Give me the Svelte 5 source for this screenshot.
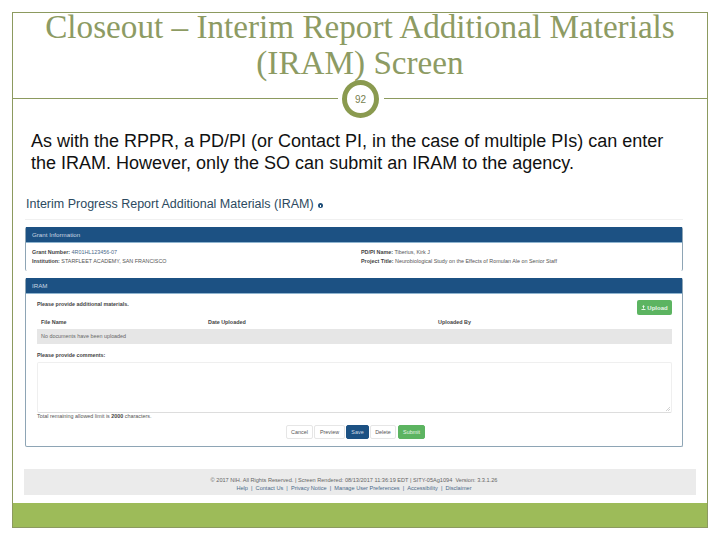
<script>
  const buttons = [
    { label: 'Cancel', kind: '' },
    { label: 'Preview', kind: 'preview' },
    { label: 'Save', kind: 'save' },
    { label: 'Delete', kind: 'delete' },
    { label: 'Submit', kind: 'submit' }
  ];
  const links = ['Help', 'Contact Us', 'Privacy Notice', 'Manage User Preferences', 'Accessibility', 'Disclaimer'];
</script>

<div class="slide">
  <header class="head">
    <h1>Closeout – Interim Report Additional Materials (IRAM) Screen</h1>
    <i class="gap"></i>
    <div class="num"><span>92</span></div>
  </header>

  <main class="body">
    <p class="lead">As with the RPPR, a PD/PI (or Contact PI, in the case of multiple PIs) can enter the IRAM. However, only the SO can submit an IRAM to the agency.</p>

    <div class="shot">
      <div class="shot-title">
        <h2>Interim Progress Report Additional Materials (IRAM)</h2>
        <svg class="help" viewBox="0 0 10 10" width="5" height="5"><circle cx="5" cy="5" r="5" fill="#1f4e79" /><rect x="4" y="4" width="2" height="4" fill="#fff" /></svg>
      </div>

      <section class="panel grant">
        <div class="panel-head">Grant Information</div>
        <div class="grant-body">
          <div>
            <div><b>Grant Number:</b> <span class="link">4R01HL123456-07</span></div>
            <div><b>Institution:</b> STARFLEET ACADEMY, SAN FRANCISCO</div>
          </div>
          <div>
            <div><b>PD/PI Name:</b> Tiberius, Kirk J</div>
            <div><b>Project Title:</b> Neurobiological Study on the Effects of Romulan Ale on Senior Staff</div>
          </div>
        </div>
      </section>

      <section class="panel iram">
        <div class="panel-head">IRAM</div>
        <div class="iram-body">
          <div class="provide">
            <b>Please provide additional materials.</b>
            <span class="upload">
              <svg viewBox="0 0 10 10" width="5" height="5"><path d="M5 0 8 3.500H6V7H4V3.500H2ZM1 8h8v2H1Z" fill="#e8f5e8" /></svg>
              Upload
            </span>
          </div>
          <div class="cols">
            <b>File Name</b>
            <b>Date Uploaded</b>
            <b>Uploaded By</b>
          </div>
          <div class="empty">No documents have been uploaded</div>
          <b class="label">Please provide comments:</b>
          <div class="box">
            <svg class="grip" viewBox="0 0 6 6" width="4" height="4"><path d="M0 6 6 0M3 6 6 3" stroke="#bbb" fill="none" /></svg>
          </div>
          <div class="limit">Total remaining allowed limit is <b>2000</b> characters.</div>
          <div class="actions">
            {#each buttons as btn}
              <span class="btn {btn.kind}">{btn.label}</span>
            {/each}
          </div>
        </div>
      </section>

      <footer class="foot">
        <div>© 2017 NIH. All Rights Reserved. | Screen Rendered: 08/13/2017 11:36:19 EDT | SITY-05Ag1094 &nbsp;Version: 3.3.1.26</div>
        <div class="foot-links">
          {#each links as link, i}
            <span>{link}</span>{#if i < links.length - 1}&nbsp; | &nbsp;{/if}
          {/each}
        </div>
      </footer>
    </div>
  </main>

  <div class="bar"></div>
</div>

<style>
  :global(body) {
    background: #fff;
  }

  .slide {
    box-sizing: border-box;
    width: 696px;
    height: 516px;
    margin: 12px 0 0 12px;
    border: 1px solid #8c9a5f;
    display: flex;
    flex-direction: column;
  }

  .head {
    position: relative;
    height: 85px;
    flex: none;
    border-bottom: 1px solid #8c9a5f;
    text-align: center;
  }

  h1 {
    margin: -4px auto 0;
    width: 680px;
    font: 400 33.200px/36px "Liberation Serif", serif;
    color: #8d9b63;
  }

  .gap {
    position: absolute;
    left: 325px;
    top: 83px;
    width: 46px;
    height: 4px;
    background: #fff;
  }

  .num {
    position: absolute;
    left: 329px;
    top: 67px;
    box-sizing: border-box;
    width: 37px;
    height: 38px;
    border: 5px solid #8a9a4f;
    border-radius: 50%;
    background: #fff;
    display: flex;
    align-items: center;
    justify-content: center;
  }

  .num span {
    font: 400 10px "Liberation Sans", sans-serif;
    color: #77804f;
  }

  .body {
    flex: 1;
    min-height: 0;
    padding: 31px 12px 0 18px;
    font-family: "Liberation Sans", sans-serif;
  }

  .lead {
    margin: 0;
    width: 640px;
    font-size: 18px;
    line-height: 22px;
    color: #111;
  }

  .shot {
    margin: 20px 10px 0 -6px;
    width: 658px;
    font-size: 5.400px;
    line-height: 8px;
    color: #555;
  }

  .shot-title {
    display: flex;
    align-items: center;
    gap: 4px;
    height: 20px;
    padding-bottom: 5px;
    padding-left: 1px;
    border-bottom: 1px solid #f0f0f0;
  }

  h2 {
    margin: 0;
    font-size: 12.500px;
    font-weight: 400;
    color: #2c4a60;
  }

  .help {
    margin-top: 2px;
  }

  .panel {
    box-sizing: border-box;
    border: 1px solid #8ea5b5;
    border-top: 0;
    border-radius: 2px;
  }

  .grant {
    margin-top: 7px;
    height: 44px;
    border-bottom: 0;
  }

  .iram {
    margin-top: 7px;
    height: 169px;
  }

  .panel-head {
    height: 15px;
    padding-left: 6px;
    background: #1c5183;
    border-bottom: 1px solid #8fb4cf;
    color: #c9d6e2;
    font-size: 6.200px;
    line-height: 15px;
  }

  .grant-body {
    display: grid;
    grid-template-columns: 329px 1fr;
    padding: 5px 6px;
    line-height: 9px;
  }

  .link {
    color: #4a6a8a;
  }

  b {
    font-weight: 700;
    color: #444;
  }

  .iram-body {
    padding: 0 10px 0 11px;
  }

  .provide {
    display: flex;
    justify-content: space-between;
    align-items: flex-start;
    height: 15px;
    padding-top: 6px;
  }

  .upload {
    display: flex;
    align-items: center;
    justify-content: center;
    gap: 1px;
    width: 35px;
    height: 15px;
    border-radius: 2px;
    background: #5cb461;
    color: #e8f5e8;
    font-weight: 700;
    font-size: 6px;
  }

  .cols {
    display: grid;
    grid-template-columns: 167px 230px 1fr;
    padding: 0 4px;
    height: 14px;
    line-height: 14px;
  }

  .empty {
    height: 15px;
    padding-left: 4px;
    line-height: 15px;
    background: #e6e6e6;
    color: #666;
  }

  .label {
    display: block;
    margin-top: 7px;
  }

  .box {
    position: relative;
    box-sizing: border-box;
    height: 51px;
    margin-top: 3px;
    border: 1px solid #efefef;
    border-bottom-color: #ddd;
    border-radius: 2px;
  }

  .grip {
    position: absolute;
    right: 1px;
    bottom: 1px;
  }

  .limit {
    margin-top: -1px;
  }

  .actions {
    display: flex;
    justify-content: center;
    gap: 1px;
    margin-top: 5px;
    padding-left: 2px;
  }

  .btn {
    box-sizing: border-box;
    display: flex;
    align-items: center;
    justify-content: center;
    width: 27px;
    height: 14px;
    border: 1px solid #e6e6e6;
    border-radius: 2px;
    color: #555;
  }

  .btn.preview {
    width: 31px;
  }

  .btn.delete {
    width: 26px;
    margin-right: 1px;
  }

  .btn.save {
    width: 23px;
    background: #1c5183;
    border-color: #1c5183;
    color: #cfdce8;
  }

  .btn.submit {
    background: #5cb461;
    border-color: #5cb461;
    color: #e8f5e8;
  }

  .foot {
    margin-top: 22px;
    margin-left: -1px;
    width: 672px;
    height: 26px;
    padding: 7px 12px 0 0;
    box-sizing: border-box;
    background: #ebebeb;
    text-align: center;
    color: #666;
    font-size: 5.600px;
  }

  .foot-links {
    color: #4a6a8a;
  }

  .bar {
    height: 24px;
    flex: none;
    background: #9dbb59;
  }
</style>
